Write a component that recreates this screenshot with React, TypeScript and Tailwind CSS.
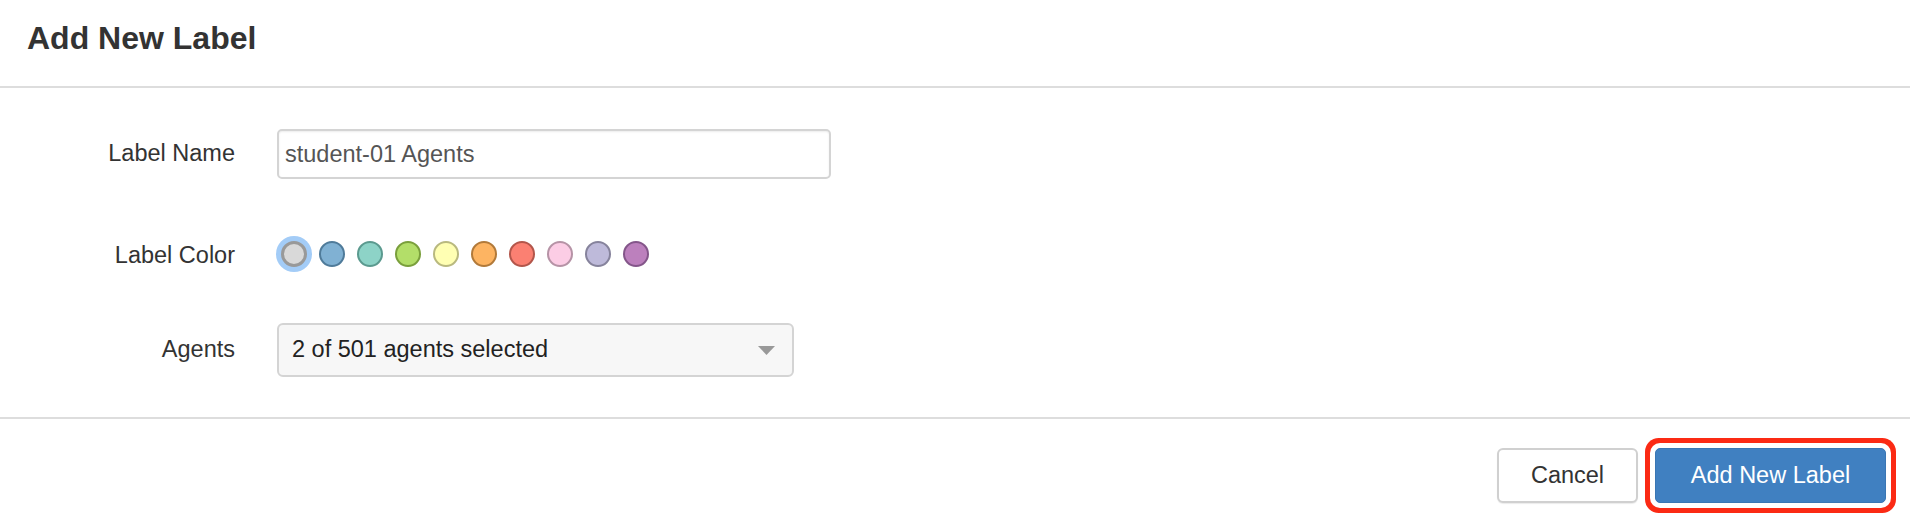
import { useState } from "react";

const colors = [
  { fill: "#d9d9d9", edge: "#999999" },
  { fill: "#80b1d3", edge: "#4f7b9a" },
  { fill: "#8dd3c7", edge: "#5b9a8f" },
  { fill: "#b3de69", edge: "#7a9f3c" },
  { fill: "#ffffb3", edge: "#b9b97f" },
  { fill: "#fdb462", edge: "#b27a3a" },
  { fill: "#fb8072", edge: "#b3564b" },
  { fill: "#fccde5", edge: "#b693a6" },
  { fill: "#bebada", edge: "#86839c" },
  { fill: "#bc80bd", edge: "#84568a" },
];

export default function App() {
  const [name, setName] = useState("student-01 Agents");
  const [picked, setPicked] = useState(0);

  return (
    <div className="w-[1910px] h-[528px] bg-white text-[#333] font-['Liberation_Sans',Arial,sans-serif] flex flex-col">
      <div className="h-[88px] pt-[22px] pl-[27px] border-b-2 border-[#dddddd]">
        <h1 className="text-[32px] leading-none font-bold text-[#333]">Add New Label</h1>
      </div>

      <div className="h-[331px] pt-[41px] flex flex-col border-b-2 border-[#dddddd]">
        <div className="flex items-center h-[50px]">
          <label className="w-[235px] text-right text-[23.5px] leading-none">Label Name</label>
          <input
            className="ml-[42px] w-[554px] h-[50px] px-[6px] border-2 border-[#d4d4d4] rounded-[5px] shadow-[inset_0_1px_2px_rgba(0,0,0,0.08)] text-[23.5px] text-[#555] focus:outline-none"
            value={name}
            onChange={(e) => setName(e.target.value)}
          />
        </div>

        <div className="flex items-center h-[36px] mt-[57px]">
          <label className="w-[235px] text-right text-[23.5px] leading-none pt-[4px]">Label Color</label>
          <div className="ml-[46px] flex items-center gap-[12px]">
            {colors.map((c, i) => (
              <button
                key={c.fill}
                type="button"
                onClick={() => setPicked(i)}
                className={
                  i === picked
                    ? "w-[26px] h-[26px] rounded-full border-[3px] shadow-[0_0_0_5px_#a3ccf7]"
                    : "w-[26px] h-[26px] rounded-full border-2"
                }
                style={{ backgroundColor: c.fill, borderColor: c.edge }}
              />
            ))}
          </div>
        </div>

        <div className="flex items-center h-[54px] mt-[51px]">
          <label className="w-[235px] text-right text-[23.5px] leading-none">Agents</label>
          <div className="ml-[42px] w-[517px] h-[54px] pl-[13px] pr-[17px] flex items-center justify-between bg-[#f7f7f7] border-2 border-[#d4d4d4] rounded-[6px]">
            <span className="text-[23.5px] text-[#222]">2 of 501 agents selected</span>
            <svg width="17" height="9" viewBox="0 0 17 9">
              <polygon points="0,0 17,0 8.5,9" fill="#999999" />
            </svg>
          </div>
        </div>
      </div>

      <div className="flex-1 flex justify-end items-start pt-[29px] pr-[24px] gap-[17px]">
        <button
          type="button"
          className="w-[141px] h-[55px] bg-white border-2 border-[#d0d0d0] rounded-[6px] shadow-[0_1px_1px_rgba(0,0,0,0.08)] text-[23.5px] text-[#333]"
        >
          Cancel
        </button>
        <button
          type="button"
          className="w-[231px] h-[55px] bg-[#4080c1] border border-[#3a76b3] rounded-[5px] text-[23.5px] text-white shadow-[0_0_0_5px_#ffffff,0_0_0_10px_#fb2a14]"
        >
          Add New Label
        </button>
      </div>
    </div>
  );
}
